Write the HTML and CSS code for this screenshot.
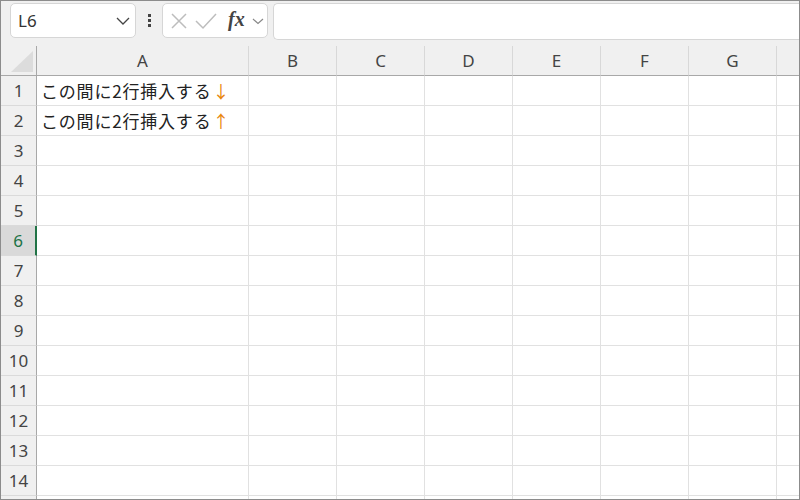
FILE: index.html
```html
<!DOCTYPE html>
<html lang="ja">
<head>
  <meta charset="UTF-8">
  <title>Sheet</title>
  <link rel="stylesheet" href="styles.css">
</head>
<body>

<div class="window">

  <!-- Formula bar -->
  <div class="toolbar">
    <div class="namebox">
      <span class="ref">L6</span>
      <svg class="chev" width="14" height="8" viewBox="0 0 14 8"><path d="M1 1 L7 7 L13 1" fill="none" stroke="#444" stroke-width="1.3"/></svg>
    </div>
    <div class="dots"><i></i><i></i><i></i></div>
    <div class="fxbox">
      <svg width="18" height="18" viewBox="0 0 18 18"><path d="M2 2 L16 16 M16 2 L2 16" stroke="#bdbdbd" stroke-width="1.5"/></svg>
      <svg width="22" height="18" viewBox="0 0 22 18"><path d="M1 9 L8 16 L21 2" fill="none" stroke="#bdbdbd" stroke-width="1.5"/></svg>
      <span class="fx">fx</span>
      <svg width="12" height="8" viewBox="0 0 12 8"><path d="M1 2 L6 6.5 L11 2" fill="none" stroke="#888" stroke-width="1.2"/></svg>
    </div>
    <div class="formula"></div>
  </div>

  <!-- Grid -->
  <div class="sheet">
    <div class="hd corner"><span class="tri"></span></div>
    <div class="hd col colA">A</div>
    <div class="hd col">B</div>
    <div class="hd col">C</div>
    <div class="hd col">D</div>
    <div class="hd col">E</div>
    <div class="hd col">F</div>
    <div class="hd col">G</div>
    <div class="hd col"></div>
  </div>
  <div id="rows"></div>

</div>

<script>
  // build rows
  var rows = document.getElementById("rows");
  var texts = { 1: ["この間に2行挿入する", "↓"], 2: ["この間に2行挿入する", "↑"] };
  for (var r = 1; r <= 15; r++) {
    var row = document.createElement("div");
    row.className = "sheet" + (r == 6 ? " sel" : "");
    var h = '<div class="rh">' + (r < 15 ? r : "") + '</div>';
    for (var c = 0; c < 8; c++) {
      var cell = "";
      if (c == 0 && texts[r]) cell = texts[r][0] + '<span class="arrow">' + texts[r][1] + '</span>';
      h += '<div class="cell' + (c == 0 ? " colA" : "") + '">' + cell + '</div>';
    }
    row.innerHTML = h;
    rows.appendChild(row);
  }
</script>

</body>
</html>
```

FILE: styles.css
```css
body { margin: 0; font-family: "Noto Sans CJK JP", "Noto Sans", sans-serif; }
.window { width: 800px; height: 500px; box-sizing: border-box; border: 1px solid #8c8c8c; background: #f0f0f0; overflow: hidden; }

.toolbar { height: 45px; display: flex; align-items: flex-start; padding-top: 2px; box-sizing: border-box; }
.namebox { margin-left: 9px; width: 126px; height: 35px; box-sizing: border-box; background: #fff; border: 1px solid #d6d6d6; border-radius: 5px; display: flex; align-items: center; justify-content: space-between; padding: 0 5px 0 7px; }
.ref { font-family: "Noto Sans", sans-serif; font-size: 17px; color: #333; }
.dots { width: 26px; height: 35px; display: flex; flex-direction: column; align-items: center; justify-content: center; gap: 2px; }
.dots i { width: 3px; height: 3px; background: #444; display: block; }
.fxbox { width: 106px; height: 35px; box-sizing: border-box; background: #fff; border: 1px solid #d6d6d6; border-radius: 5px; display: flex; align-items: center; gap: 7px; padding-left: 7px; }
.fx { font-family: "Liberation Serif", serif; font-style: italic; font-weight: bold; font-size: 20px; color: #444; margin-left: 4px; margin-top: -3px; }
.formula { flex: 1; margin-left: 5px; height: 35px; background: #fff; border: 1px solid #d6d6d6; border-right: none; border-radius: 5px 0 0 5px; }

.sheet { display: flex; height: 30px; }
.sheet > div { box-sizing: border-box; flex: none; width: 88px; height: 30px; border-right: 1px solid #e1e1e1; border-bottom: 1px solid #e1e1e1; background: #fff; }
.sheet > .colA { width: 212px; }
.sheet > .hd { background: #f0f0f0; border-bottom: 1px solid #a8a8a8; border-right: 1px solid #d8d8d8; text-align: center; font-family: "Noto Sans", sans-serif; font-size: 17px; line-height: 29px; color: #444; }
.sheet > .corner { width: 36px; position: relative; border-right: 1px solid #a8a8a8; }
.tri { position: absolute; left: 10px; top: 5px; width: 0; height: 0; border-left: 22px solid transparent; border-bottom: 21px solid #dcdcdc; }
.sheet > .rh { width: 36px; background: #f0f0f0; border-right: 1px solid #a8a8a8; border-bottom: 1px solid #dadada; text-align: center; font-family: "Noto Sans", sans-serif; font-size: 17px; line-height: 29px; color: #444; }
.sel > .rh { background: #d9d9d9; color: #217346; border-right: 2px solid #217346; }
.cell { font-size: 17px; line-height: 29px; padding-left: 4px; color: #222; white-space: nowrap; letter-spacing: 0.8px; }
.arrow { color: #e8860a; margin-left: 1px; }
```
